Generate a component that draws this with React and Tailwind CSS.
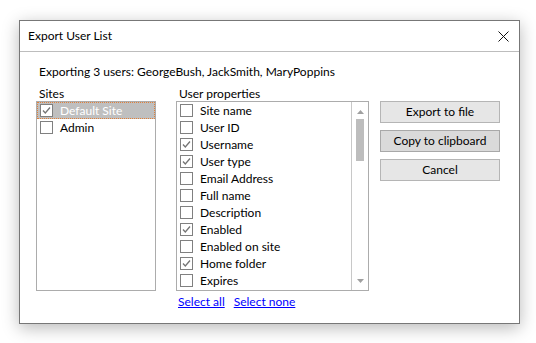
const sites = [
  { label: 'Default Site', checked: true, selected: true },
  { label: 'Admin', checked: false },
];

const props = [
  { label: 'Site name', checked: false },
  { label: 'User ID', checked: false },
  { label: 'Username', checked: true },
  { label: 'User type', checked: true },
  { label: 'Email Address', checked: false },
  { label: 'Full name', checked: false },
  { label: 'Description', checked: false },
  { label: 'Enabled', checked: true },
  { label: 'Enabled on site', checked: false },
  { label: 'Home folder', checked: true },
  { label: 'Expires', checked: false },
];

function Check({ checked }) {
  return (
    <span className="w-[13px] h-[13px] border border-[#808080] bg-white flex items-center justify-center shrink-0">
      {checked && (
        <svg width="11" height="11" viewBox="0 0 11 11">
          <path d="M2 5.5 L4.3 8 L9 2.5" fill="none" stroke="#747474" strokeWidth="1.3" />
        </svg>
      )}
    </span>
  );
}

function Row({ item }) {
  return (
    <div
      className={`h-[17px] flex items-center gap-[7px] pl-[3px] ${
        item.selected ? 'bg-[#bfbfbf] text-white outline outline-1 outline-dotted outline-[#e0803a] -outline-offset-1' : ''
      }`}
    >
      <Check checked={item.checked} />
      <span className="leading-none">{item.label}</span>
    </div>
  );
}

function Button({ children, active }) {
  return (
    <button
      className={`w-[120px] h-[22px] border leading-none text-black ${
        active ? 'bg-[#dadada] border-[#a8a8a8]' : 'bg-[#e6e6e6] border-[#b5b5b5]'
      }`}
    >
      {children}
    </button>
  );
}

export default function App() {
  return (
    <div className="w-[536px] h-[343px] bg-white pt-[20px] pl-[19px] text-[12px] text-black font-['Segoe_UI','Lato',sans-serif]">
      <div className="w-[501px] h-[304px] border border-[#777] bg-white shadow-[0_4px_16px_rgba(0,0,0,0.28)] flex flex-col">
        {/* Title bar */}
        <div className="h-[31px] border-b border-[#bdbdbd] flex items-center justify-between pl-[8px] pr-[10px] shrink-0">
          <span>Export User List</span>
          <svg width="11" height="11" viewBox="0 0 11 11">
            <path d="M0.5 0.5 L10.5 10.5 M10.5 0.5 L0.5 10.5" stroke="#111" strokeWidth="1" />
          </svg>
        </div>

        <div className="pl-[16px] pt-[12px]">
          <div className="pl-[3px] h-[16px] leading-[16px]">
            Exporting 3 users: GeorgeBush, JackSmith, MaryPoppins
          </div>

          <div className="flex mt-[7px]">
            <div className="w-[120px]">
              <div className="pl-[3px] h-[14px] leading-[14px]">Sites</div>
              <div className="h-[190px] border border-[#acacac]">
                {sites.map((s) => (
                  <Row key={s.label} item={s} />
                ))}
              </div>
            </div>

            <div className="w-[193px] ml-[20px]">
              <div className="pl-[3px] h-[14px] leading-[14px]">User properties</div>
              <div className="h-[190px] border border-[#acacac] flex">
                <div className="flex-1">
                  {props.map((p) => (
                    <Row key={p.label} item={p} />
                  ))}
                </div>
                <div className="w-[17px] border-l border-[#c8c8c8] flex flex-col items-center">
                  <svg width="7" height="4" viewBox="0 0 7 4" className="mt-[8px]">
                    <path d="M0 4 L3.5 0 L7 4 Z" fill="#a0a0a0" />
                  </svg>
                  <div className="w-[8px] h-[42px] bg-[#bdbdbd] mt-[5px]" />
                  <div className="flex-1" />
                  <svg width="7" height="4" viewBox="0 0 7 4" className="mb-[7px]">
                    <path d="M0 0 L7 0 L3.5 4 Z" fill="#a0a0a0" />
                  </svg>
                </div>
              </div>
              <div className="flex gap-[9px] pl-[2px] mt-[3px] h-[16px] items-center">
                <a href="#" className="text-[#0000ff] underline">Select all</a>
                <a href="#" className="text-[#0000ff] underline">Select none</a>
              </div>
            </div>

            <div className="ml-[11px] pt-[14px] flex flex-col gap-[7px]">
              <Button>Export to file</Button>
              <Button active>Copy to clipboard</Button>
              <Button>Cancel</Button>
            </div>
          </div>
        </div>
      </div>
    </div>
  );
}
